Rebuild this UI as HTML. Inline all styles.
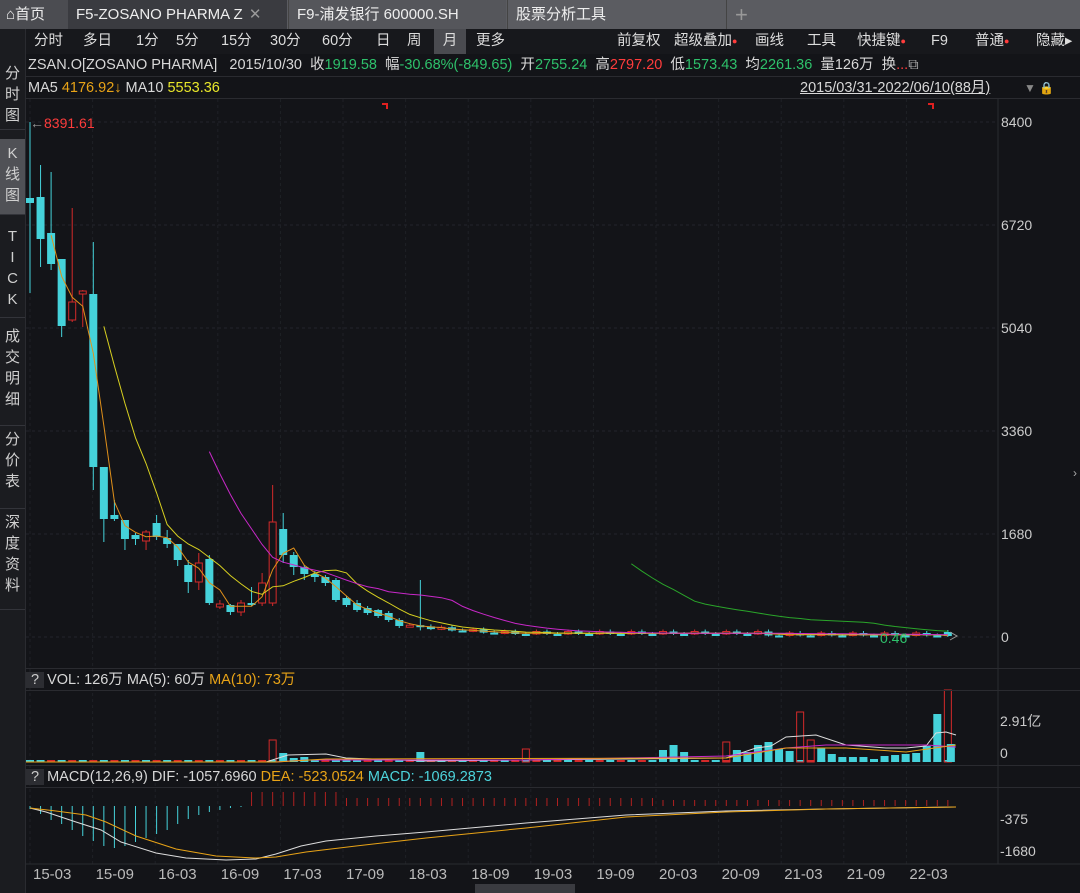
<!DOCTYPE html>
<html><head><meta charset="utf-8"><style>
*{margin:0;padding:0;box-sizing:border-box}
body{width:1080px;height:893px;background:#131418;font-family:"Liberation Sans","Noto Sans CJK SC",sans-serif;color:#d8d8d8;overflow:hidden;position:relative;font-size:14px}
.abs{position:absolute;white-space:nowrap}
.tabbar{position:absolute;left:0;top:0;width:1080px;height:29px;background:#5b5c61}
.tab{position:absolute;top:0;height:29px;line-height:29px;font-size:15px;color:#eee;padding-left:8px}
.side{position:absolute;left:0;top:29px;width:26px;height:864px;background:#1b1c20;border-right:1px solid #2a2b30}
.sv{position:absolute;left:0;width:25px;text-align:center;font-size:15px;line-height:21px;color:#d0d0d0;border-bottom:1px solid #33343a}
.tb span{position:absolute;top:0;height:25px;line-height:25px;font-size:14.5px;color:#ddd}
.g{color:#2ec16b}.r{color:#ff3c3c}.o{color:#e8a317}.y{color:#e8e62a}.c{color:#4dd4dc}
</style></head><body>
<div class="tabbar">
 <div class="tab" style="left:0;width:68px;background:#4b4c51;padding-left:6px">⌂首页</div>
 <div class="tab" style="left:68px;width:219px;background:#3a3b40">F5-ZOSANO PHARMA Z <span style="color:#999;margin-left:2px">✕</span></div>
 <div class="tab" style="left:288px;width:218px;background:#55565b;border-left:1px solid #444">F9-浦发银行 600000.SH</div>
 <div class="tab" style="left:507px;width:219px;background:#5b5c61;border-left:1px solid #444">股票分析工具</div>
 <div class="tab" style="left:726px;width:30px;border-left:1px solid #444;color:#999;font-size:22px">+</div>
</div>
<div class="side">
 <div class="sv" style="top:31px;height:70px;padding-top:3px">分<br>时<br>图</div>
 <div class="sv" style="top:110px;height:76px;background:#505156;padding-top:4px">K<br>线<br>图</div>
 <div class="sv" style="top:194px;height:95px;padding-top:3px">T<br>I<br>C<br>K</div>
 <div class="sv" style="top:295px;height:102px;padding-top:2px">成<br>交<br>明<br>细</div>
 <div class="sv" style="top:398px;height:82px;padding-top:2px">分<br>价<br>表</div>
 <div class="sv" style="top:481px;height:100px;padding-top:2px">深<br>度<br>资<br>料</div>
</div>
<div class="tb" style="position:absolute;left:26px;top:29px;width:1054px;height:25px;background:#17181c">
 <span style="left:8px">分时</span><span style="left:57px">多日</span><span style="left:110px">1分</span><span style="left:150px">5分</span><span style="left:195px">15分</span><span style="left:244px">30分</span><span style="left:296px">60分</span><span style="left:350px">日</span><span style="left:381px">周</span>
 <span style="left:408px;width:32px;background:#4a4b50;text-align:center">月</span><span style="left:450px">更多</span>
 <span style="left:591px">前复权</span><span style="left:648px">超级叠加<b class="r" style="font-size:9px;vertical-align:top">●</b></span><span style="left:729px">画线</span><span style="left:781px">工具</span><span style="left:831px">快捷键<b class="r" style="font-size:9px;vertical-align:top">●</b></span><span style="left:905px">F9</span><span style="left:949px">普通<b class="r" style="font-size:9px;vertical-align:top">●</b></span><span style="left:1010px">隐藏▸</span>
</div>
<div class="abs" style="left:26px;top:54px;width:1054px;height:23px;border-bottom:1px solid #2a2b30;line-height:22px;font-size:14.5px;padding-left:2px">ZSAN.O[ZOSANO PHARMA]&nbsp;&nbsp; 2015/10/30&nbsp; 收<span class="g">1919.58</span>&nbsp; 幅<span class="g">-30.68%(-849.65)</span>&nbsp; 开<span class="g">2755.24</span>&nbsp; 高<span class="r">2797.20</span>&nbsp; 低<span class="g">1573.43</span>&nbsp; 均<span class="g">2261.36</span>&nbsp; 量126万&nbsp; 换<span class="r">...</span><span style="color:#aaa">⧉</span></div>
<div class="abs" style="left:26px;top:77px;width:1054px;height:22px;border-bottom:1px solid #2a2b30;line-height:22px;font-size:14.5px;padding-left:2px">MA5 <span class="o">4176.92↓</span> MA10 <span class="y">5553.36</span></div>
<div class="abs" style="left:800px;top:77px;line-height:22px;font-size:14.5px;text-decoration:underline">2015/03/31-2022/06/10(88月)</div>
<div class="abs" style="left:1024px;top:77px;line-height:22px;font-size:12px;color:#888">▼ <span style="color:#e8a317">🔒</span></div>
<svg id="ch" class="abs" style="left:26px;top:0" width="1054" height="893" xmlns="http://www.w3.org/2000/svg"></svg>
<div class="abs" style="left:1001px;top:113px;font-size:14px;color:#ccc;line-height:18px">8400</div>
<div class="abs" style="left:1001px;top:216px;font-size:14px;color:#ccc;line-height:18px">6720</div>
<div class="abs" style="left:1001px;top:319px;font-size:14px;color:#ccc;line-height:18px">5040</div>
<div class="abs" style="left:1001px;top:422px;font-size:14px;color:#ccc;line-height:18px">3360</div>
<div class="abs" style="left:1001px;top:525px;font-size:14px;color:#ccc;line-height:18px">1680</div>
<div class="abs" style="left:1001px;top:628px;font-size:14px;color:#ccc;line-height:18px">0</div>
<div class="abs" style="left:30px;top:114px;font-size:14px;line-height:18px"><span style="color:#999">←</span><span class="r">8391.61</span></div>
<div class="abs" style="left:880px;top:629px;font-size:14px;line-height:18px"><span class="g">0.46</span></div>
<div class="abs" style="left:1073px;top:466px;font-size:12px;color:#aaa">›</div>
<div class="abs" style="left:26px;top:668px;width:1054px;height:23px;border-top:1px solid #2a2b30;border-bottom:1px solid #2a2b30;line-height:22px;font-size:14.5px"><span style="background:#2c2d32;color:#ccc;padding:0 5px;margin-right:3px">?</span>VOL: 126万 MA(5): 60万 <span class="o">MA(10): 73万</span></div>
<div class="abs" style="left:1000px;top:711px;font-size:14px;color:#ccc">2.91亿</div>
<div class="abs" style="left:1000px;top:745px;font-size:14px;color:#ccc">0</div>
<div class="abs" style="left:26px;top:765px;width:1054px;height:23px;border-top:1px solid #2a2b30;border-bottom:1px solid #2a2b30;line-height:22px;font-size:14.5px"><span style="background:#2c2d32;color:#ccc;padding:0 5px;margin-right:3px">?</span>MACD(12,26,9) DIF: -1057.6960 <span class="o">DEA: -523.0524</span> <span class="c">MACD: -1069.2873</span></div>
<div class="abs" style="left:1000px;top:811px;font-size:14px;color:#ccc">-375</div>
<div class="abs" style="left:1000px;top:843px;font-size:14px;color:#ccc">-1680</div>
<div id="tl"></div>
<script>
(function(){
var svg=document.getElementById('ch');var h='';
function X(i){return 4+i*10.55;}
for(var k=0;k<6;k++){var yy=122+k*103;h+='<line x1="0" x2="970" y1="'+yy+'" y2="'+yy+'" stroke="#23252b" stroke-dasharray="3,3"/>';}
h+='<line x1="972" x2="972" y1="99" y2="864" stroke="#2a2b30"/>';
var labs=['15-03','15-09','16-03','16-09','17-03','17-09','18-03','18-09','19-03','19-09','20-03','20-09','21-03','21-09','22-03'];
var tl='';
for(var k=0;k<15;k++){var xx=4+k*62.6;h+='<line x1="'+xx+'" x2="'+xx+'" y1="99" y2="864" stroke="#1f2126" stroke-dasharray="3,3"/>';tl+='<div class="abs" style="left:'+(26+xx+3)+'px;top:866px;font-size:15px;color:#bbb">'+labs[k]+'</div>';}
document.getElementById('tl').innerHTML=tl;
h+='<line x1="0" x2="1054" y1="864" y2="864" stroke="#2a2b30"/>';
h+='<rect x="449" y="884" width="100" height="9" fill="#3a3b40"/>';
var D=[[198,203,122,293],[197,239,165,267],[233,264,172,270],[259,326,259,337],[320,302,208,322],[294,291,290,327],[294,467,242,490],[467,519,467,542],[515,519,500,521],[520,539,520,550],[535,539,533,545],[541,532,530,550],[523,537,515,540],[538,544,530,548],[544,560,544,566],[565,582,560,593],[582,563,553,590],[559,603,555,605],[607,604,600,609],[605,612,604,615],[612,603,600,616],[603,604,587,606],[603,583,573,606],[603,522,485,606],[529,555,513,563],[555,567,552,575],[567,574,565,580],[574,577,571,582],[577,583,575,586],[580,600,578,602],[598,605,596,607],[603,610,600,612],[608,613,606,615],[610,616,609,618],[613,620,611,622],[620,626,618,628]];
var p=626;
for(var i=36;i<88;i++){var t=(i<46)?626+(i-35)*0.7:(i<70?633:634.5);var o=p,c=t+((i%3==0)?-1.5:1);if(i==37){D.push([o,c-2,580,c+2]);p=c-2;continue;}D.push([o,c,Math.min(o,c)-2,Math.max(o,c)+1]);p=c;}
D[87]=[632,636,630,637];
for(var i=0;i<D.length;i++){var d=D[i],x=X(i),o=d[0],c=d[1],tp=Math.min(o,c),bh=Math.max(Math.abs(c-o),2);var up=c<o;var col=up?'#d42a2a':'#45d2da';
h+='<line x1="'+x+'" x2="'+x+'" y1="'+d[2]+'" y2="'+d[3]+'" stroke="'+col+'"/>';
if(up)h+='<rect x="'+(x-3.5)+'" y="'+tp+'" width="7" height="'+bh+'" fill="#131418" stroke="'+col+'"/>';else h+='<rect x="'+(x-4)+'" y="'+tp+'" width="8" height="'+bh+'" fill="'+col+'"/>';}
function ma(n,col){var pts=[];for(var i=n-1;i<D.length;i++){var s=0;for(var j=i-n+1;j<=i;j++)s+=D[j][1];pts.push(X(i)+','+(s/n).toFixed(1));}h+='<polyline fill="none" stroke="'+col+'" stroke-width="1" points="'+pts.join(' ')+'"/>';}
ma(3,'#e0901a');ma(8,'#d8d020');ma(18,'#c828c8');ma(58,'#2aa52a');
h+='<path d="M356 104h5v5M902 104h5v5" stroke="#e02020" stroke-width="2" fill="none"/>';
h+='<path d="M924 632 L931 636 L924 640" stroke="#999" fill="none"/>';
var V=[[0,760,0],[23,740,1],[24,753,0],[25,758,0],[26,757,0],[30,759,0],[37,752,0],[47,749,1],[60,750,0],[61,745,0],[62,752,0],[66,742,1],[67,750,0],[68,752,0],[69,745,0],[70,742,0],[71,749,0],[72,751,0],[73,712,1],[74,740,1],[75,748,0],[76,754,0],[77,757,0],[78,757,0],[79,757,0],[80,759,0],[81,756,0],[82,755,0],[83,754,0],[84,753,0],[85,746,0],[86,714,0],[87,690,1],[88,744,0]];
for(var i=0;i<88;i++){var x=X(i);h+='<rect x="'+(x-4)+'" y="760" width="8" height="2" fill="'+(i%2?'#45d2da':'#d42a2a')+'"/>';}
for(var k=0;k<V.length;k++){var v=V[k],x=X(v[0]);if(v[0]>87)x=X(87)+3;if(v[2])h+='<rect x="'+(x-3.5)+'" y="'+v[1]+'" width="7" height="'+(762-v[1])+'" fill="none" stroke="#d42a2a"/>';else h+='<rect x="'+(x-4)+'" y="'+v[1]+'" width="8" height="'+(762-v[1])+'" fill="#45d2da"/>';}
h+='<polyline fill="none" stroke="#ddd" points="0,762 240,762 262,755 300,754 320,758 400,761 700,758 730,748 745,746 760,737 790,735 820,745 860,748 880,748 900,746 910,733 920,732 930,735"/>';
h+='<polyline fill="none" stroke="#c828c8" points="0,762 250,762 280,760 500,760 700,756 760,748 800,745 900,745 930,747"/>';
h+='<polyline fill="none" stroke="#e8a317" points="0,762 250,762 300,759 700,758 760,748 820,748 880,752 930,745"/>';
for(var i=0;i<88;i++){var x=X(i);if(i<21){var hh=[3,8,14,18,24,30,35,40,42,40,36,32,28,24,18,13,9,6,4,2,1][i];h+='<line x1="'+x+'" x2="'+x+'" y1="806" y2="'+(806+hh)+'" stroke="#45d2da"/>';}else{var hh=i<30?14:(i<60?8:6);h+='<line x1="'+x+'" x2="'+x+'" y1="'+(806-hh)+'" y2="806" stroke="#b02020"/>';}}
h+='<polyline fill="none" stroke="#ddd" points="4,808 20,812 50,822 75,830 95,842 130,853 160,858 200,860 230,859 250,854 275,846 300,841 350,836 400,832 500,823 600,815 700,811 800,809 930,807"/>';
h+='<polyline fill="none" stroke="#e8a317" points="4,808 30,811 60,815 80,822 110,836 150,849 190,856 230,858 250,857 280,852 330,846 400,838 500,828 600,817 700,812 800,809 930,807"/>';
svg.innerHTML=h;
})();
</script>
</body></html>
